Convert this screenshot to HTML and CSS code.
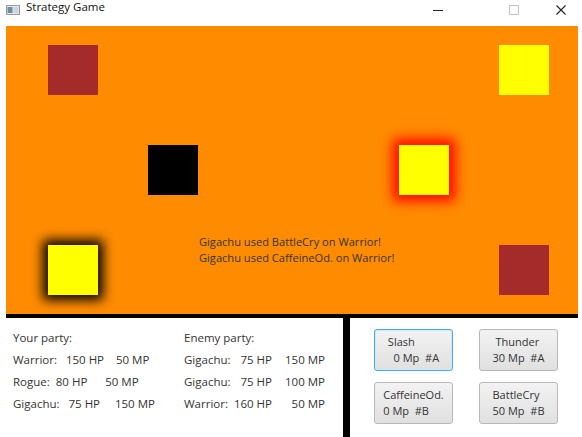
FILE: index.html
```html
<!DOCTYPE html>
<html>
<head>
<meta charset="utf-8">
<link rel="stylesheet" href="styles.css">
</head>
<body>
<div class="titlebar">
  <svg class="appicon" width="14" height="10" viewBox="0 0 14 10">
    <rect x="0.5" y="0.5" width="13" height="9" fill="#e8e8e8" stroke="#9a9a9a"/>
    <rect x="1.5" y="2" width="5" height="6" fill="#6d8fa6"/>
    <rect x="7.5" y="2" width="5" height="6" fill="#c9d6df"/>
  </svg>
  <span class="title">Strategy Game</span>
  <div class="controls">
    <svg class="ctl" width="12" height="12" viewBox="0 0 12 12"><line x1="1" y1="6.5" x2="11" y2="6.5" stroke="#222" stroke-width="1"/></svg>
    <svg class="ctl" width="12" height="12" viewBox="0 0 12 12"><rect x="1.5" y="1.5" width="9" height="9" fill="none" stroke="#c4c4c4" stroke-width="1"/></svg>
    <svg class="ctl" width="12" height="12" viewBox="0 0 12 12"><path d="M1.5 1.5 L10.5 10.5 M10.5 1.5 L1.5 10.5" stroke="#222" stroke-width="1.1"/></svg>
  </div>
</div>
<div class="window">
  <div class="field">
    <div class="sq brown" style="left:42px;top:19px"></div>
    <div class="sq yellow" style="left:493px;top:19px"></div>
    <div class="sq black" style="left:142px;top:119px"></div>
    <div class="sq yellow glow-red" style="left:393px;top:119px"></div>
    <div class="sq yellow glow-black" style="left:42px;top:219px"></div>
    <div class="sq brown" style="left:493px;top:219px"></div>
    <div class="log">
      <div>Gigachu used BattleCry on Warrior!</div>
      <div>Gigachu used CaffeineOd. on Warrior!</div>
    </div>
  </div>
  <div class="bottom">
    <div class="party">
      <div class="col ours">
        <div class="row">Your party:</div>
        <div class="row">Warrior:   150 HP    50 MP</div>
        <div class="row">Rogue:  80 HP      50 MP</div>
        <div class="row">Gigachu:   75 HP     150 MP</div>
      </div>
      <div class="col enemy">
        <div class="row head">Enemy party:</div>
        <div class="grid">
          <span>Gigachu:</span><span class="num">75 HP</span><span class="num">150 MP</span>
          <span>Gigachu:</span><span class="num">75 HP</span><span class="num">100 MP</span>
          <span>Warrior:</span><span class="num">160 HP</span><span class="num">50 MP</span>
        </div>
      </div>
    </div>
    <div class="divider"></div>
    <div class="actions">
      <button class="btn focused"><span class="lbl">Slash
  0 Mp  #A</span></button>
      <button class="btn"><span class="lbl"> Thunder
30 Mp  #A</span></button>
      <button class="btn"><span class="lbl">CaffeineOd.
0 Mp  #B</span></button>
      <button class="btn"><span class="lbl">BattleCry
50 Mp  #B</span></button>
    </div>
  </div>
</div>
</body>
</html>
```
FILE: styles.css
```css
* { box-sizing: border-box; }
html, body {
  margin: 0;
  padding: 0;
  background: #ffffff;
  width: 582px;
  height: 437px;
  overflow: hidden;
  font-family: "Open Sans", "Liberation Sans", sans-serif;
  font-size: 11px;
  color: #333333;
}
.titlebar {
  height: 26px;
  display: flex;
  align-items: flex-start;
  position: relative;
  background: #ffffff;
}
.appicon {
  margin: 5px 0 0 6px;
}
.title {
  margin: -1px 0 0 6px;
  font-family: "Open Sans", sans-serif;
  font-size: 11.5px;
  line-height: 16px;
  color: #111;
}
.controls {
  margin-left: auto;
  display: flex;
  margin-top: 4px;
}
.ctl { display: block; }
.ctl:nth-child(1) { margin-right: 64px; }
.ctl:nth-child(2) { margin-right: 35px; }
.ctl:nth-child(3) { margin-right: 15px; }
.window {
  margin: 0 4px 0 6px;
}
.field {
  position: relative;
  height: 292px;
  background: #ff8c00;
  border-bottom: 4px solid #000;
}
.sq {
  position: absolute;
  width: 50px;
  height: 50px;
}
.brown { background: #a52a2a; }
.yellow { background: #ffff00; }
.black { background: #000000; }
.glow-red { box-shadow: 0 0 12px 6px #ff0000; }
.glow-black { box-shadow: 0 0 11px 5px #000000; }
.log {
  position: absolute;
  left: 193px;
  top: 208px;
  line-height: 16px;
  font-size: 11.1px;
  color: #333;
}
.bottom {
  display: flex;
  height: 119px;
}
.party {
  width: 337px;
  display: flex;
  padding: 9px 0 0 7px;
  background: #fff;
  font-size: 11.5px;
}
.col { line-height: 22px; }
.ours { width: 171px; }
.row { white-space: pre; }
.grid {
  display: grid;
  grid-template-columns: 48px 40px 53px;
  white-space: nowrap;
}
.num { text-align: right; }
.divider {
  width: 7px;
  background: #000;
}
.actions {
  flex: 1;
  display: grid;
  grid-template-columns: 79px 79px;
  grid-auto-rows: 42px;
  column-gap: 26px;
  row-gap: 11px;
  padding: 11px 0 0 24px;
  align-content: start;
}
.btn {
  font-family: inherit;
  font-size: 11px;
  color: #333;
  line-height: 16px;
  margin: 0;
  padding: 3px 4px;
  border: 1px solid #b8b8b8;
  border-radius: 3px;
  background: linear-gradient(#f2f2f2, #e0e0e0);
  display: flex;
  align-items: center;
  justify-content: center;
}
.lbl {
  display: block;
  white-space: pre;
  text-align: left;
}
.focused {
  border-color: #45ade0;
  box-shadow: inset 0 0 0 1px #cfeaf6;
}
```
